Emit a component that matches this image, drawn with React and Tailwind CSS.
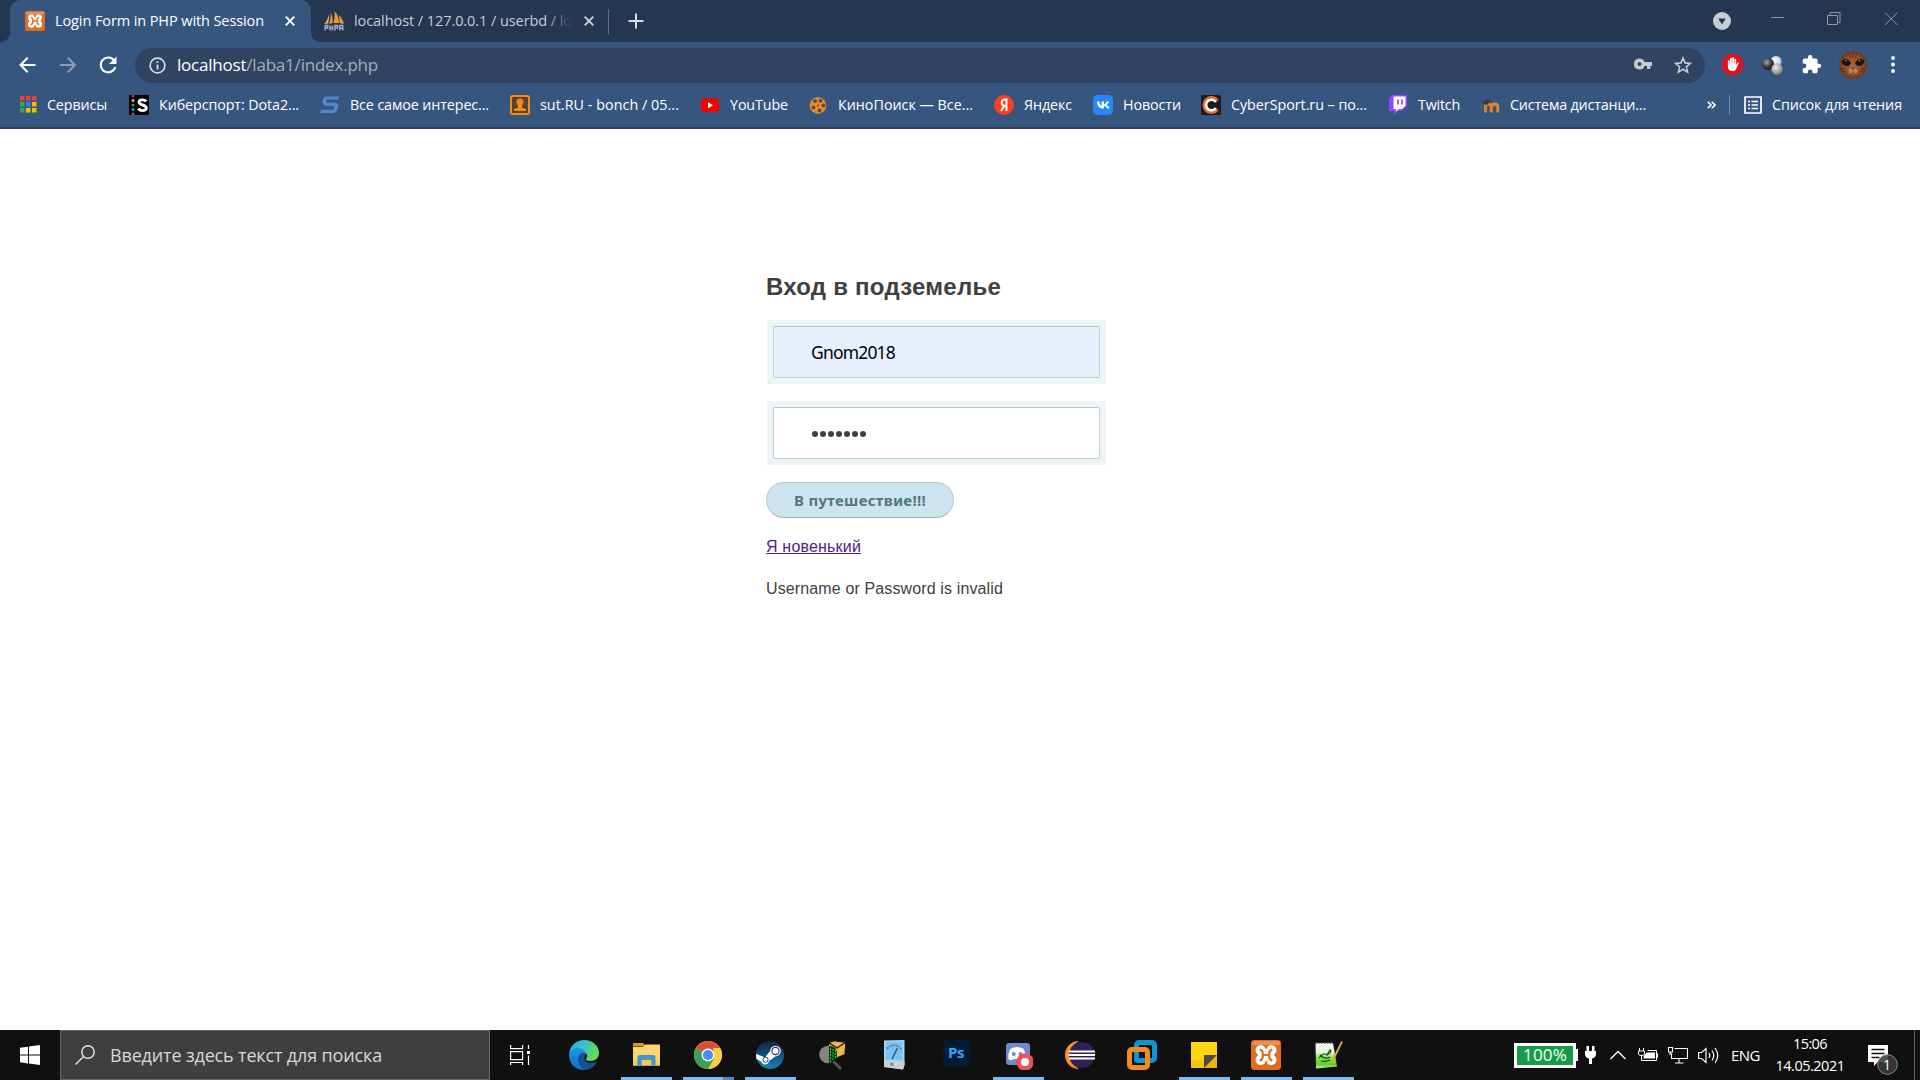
import React, { useLayoutEffect, useRef } from "react";

const UI = "font-['Open_Sans','Noto_Sans',sans-serif]";

/* Single-line label whose letters are spaced so that it fills its given width. */
function Label({ w, children, className = "", inner = "" }) {
  const ref = useRef(null);
  useLayoutEffect(() => {
    const el = ref.current;
    el.style.letterSpacing = "0px";
    const natural = el.getBoundingClientRect().width;
    const count = Math.max(1, el.textContent.length);
    el.style.letterSpacing = `${(w - natural) / count}px`;
  }, [w, children]);
  return (
    <span className={`block shrink-0 whitespace-nowrap ${className}`} style={{ width: w }}>
      <span ref={ref} className={`inline-block ${inner}`}>{children}</span>
    </span>
  );
}

function Xampp({ size }) {
  return (
    <svg width={size} height={size} viewBox="0 0 30 30" className="shrink-0">
      <rect width="30" height="30" rx="3.500" fill="#e06c22" />
      <rect x="1" y="1" width="28" height="4" rx="2" fill="#f4a778" opacity=".6" />
      <g fill="#fff">
        <circle cx="9.800" cy="10.300" r="5.300" /><circle cx="20.200" cy="10.300" r="5.300" />
        <circle cx="9.800" cy="19.700" r="5.300" /><circle cx="20.200" cy="19.700" r="5.300" />
        <path d="M7 12h16v6H7ZM12 9h6v12h-6Z" />
      </g>
      <path d="M15 5v3.500M15 25v-3.500M3.500 15h2.500M26.500 15H24" stroke="#e06c22" strokeWidth="2.400" />
      <path d="M9.500 9.700c3.300 1.800 3.300 8.800 0 10.600M20.500 9.700c-3.300 1.800-3.300 8.800 0 10.600M12 15h6" fill="none" stroke="#e06c22" strokeWidth="2.200" strokeLinecap="round" />
    </svg>
  );
}

function PmaIcon() {
  return (
    <svg width="20" height="20" viewBox="0 0 20 20" className="shrink-0">
      <path d="M5 13C6.500 9 7 5 6.500 1.500c2 3 2.500 7 2 10.500ZM9.500 12c1-3 1.500-8 1-12 3 3 4.500 8 4.500 12ZM15.300 12c.5-3 .3-5-.5-8 2.700 2 4.500 6 5 9Z" fill="#f29a2e" />
      <path d="M0 13c2.500-2 4-5.500 4.500-9.500.8 3 .6 5.500-.5 9Z" fill="#e8b06a" />
      <path d="M1.200 19.500v-5h2.500v2.500H1.200M6 19.500v-5M6 17h2.500M8.500 14.500v5M11 19.500v-5h2.500v2.500H11M15.700 19.500v-5h3v5M15.700 17.300h3" stroke="#a4abca" strokeWidth="1.500" fill="none" />
    </svg>
  );
}

const Cross = ({ color }) => (
  <svg width="10" height="10" viewBox="0 0 10 10" className="shrink-0">
    <path d="M.7.7l8.600 8.600M9.300.7L.7 9.300" stroke={color} strokeWidth="1.900" />
  </svg>
);

function TabStrip() {
  return (
    <div className="flex h-[42px] bg-[#243650]">
      <svg width="10" height="42" viewBox="0 0 10 42" className="shrink-0"><path d="M0 42C6 42 10 38 10 32V42Z" fill="#37567f" /></svg>
      <div className="flex h-full w-[301px] items-center rounded-t-[10px] bg-[#37567f] pl-[15px] text-[14.500px] text-white">
        <Xampp size={20} />
        <Label w={209} className="ml-[10px]">Login Form in PHP with Session</Label>
        <div className="ml-[21px]"><Cross color="#fff" /></div>
      </div>
      <svg width="10" height="42" viewBox="0 0 10 42" className="shrink-0"><path d="M10 42C4 42 0 38 0 32V42Z" fill="#37567f" /></svg>
      <div className="flex items-center pl-[3px] text-[14.500px] text-[#c6ccd5]">
        <PmaIcon />
        <div className="relative ml-[10px] w-[218px] overflow-hidden">
          <Label w={218}>localhost / 127.0.0.1 / userbd / lo</Label>
          <div className="absolute inset-y-0 right-0 w-[26px] bg-linear-to-r from-transparent to-[#243650]" />
        </div>
        <div className="ml-[12px]"><Cross color="#cdd3da" /></div>
        <div className="ml-[14px] h-[25px] w-px bg-[#62728a]" />
        <svg width="16" height="16" viewBox="0 0 16 16" className="ml-[19px]"><path d="M8 .5v15M.5 8h15" stroke="#d8dde3" strokeWidth="2" /></svg>
      </div>
      <svg width="18" height="18" viewBox="0 0 18 18" className="ml-auto mt-[12px] shrink-0">
        <circle cx="9" cy="9" r="9" fill="#c8ccd4" /><path d="M5.200 6.500h7.600L9 12.500Z" fill="#243650" />
      </svg>
      <svg width="189" height="42" viewBox="0 0 189 42" className="shrink-0" fill="none" stroke="#8f99a8" strokeWidth="1">
        <path d="M40 17.500h13M96.500 15.500h10v9h-10ZM99 15v-2.500h10v10h-2.500M154 12.500l12.500 12.500M166.500 12.500L154 25" />
      </svg>
    </div>
  );
}

function Avatar() {
  return (
    <svg width="28" height="28" viewBox="0 0 28 28" className="shrink-0">
      <defs><radialGradient id="fur" cx=".5" cy=".5" r=".6"><stop offset="0" stopColor="#a9653a" /><stop offset=".6" stopColor="#8c4a25" /><stop offset="1" stopColor="#552810" /></radialGradient></defs>
      <circle cx="14" cy="14" r="14" fill="url(#fur)" />
      <path d="M10 2l1.500 5M14 1v6M18 2l-1.500 5M1 17l5 1M2 21l5-1M27 17l-5 1M26 21l-5-1" stroke="#5d2c14" strokeWidth=".9" />
      <path d="M2.500 10.500C4 7 9 7 12 12c-1.500 4.500-7.500 4-9.500-1.500Z" fill="#1a120f" /><path d="M25.500 10.500C24 7 19 7 16 12c1.500 4.500 7.500 4 9.500-1.500Z" fill="#1a120f" />
      <circle cx="7" cy="9.800" r=".7" fill="#bbb" /><circle cx="20.500" cy="9.800" r=".7" fill="#bbb" />
      <ellipse cx="14" cy="20" rx="4.500" ry="3.300" fill="#bb8666" />
      <path d="M12.500 17h3L14 18.800ZM14 19v2M11.500 22.500q2.500-2 5 0" fill="#7a4030" stroke="#7a4030" strokeWidth=".6" />
    </svg>
  );
}

function Toolbar() {
  return (
    <div className="flex h-[46px] items-center bg-[#37567f] pl-[17px]">
      <svg width="20" height="20" viewBox="0 0 20 20" fill="none" stroke="#fff" strokeWidth="2"><path d="M18.500 10H3.500M10.700 2.700L3.500 10l7.200 7.300" /></svg>
      <svg width="20" height="20" viewBox="0 0 20 20" className="ml-[21px]" fill="none" stroke="#8b9db7" strokeWidth="2"><path d="M2 10h14.500M9.800 2.700L17 10l-7.200 7.300" /></svg>
      <svg width="20" height="20" viewBox="0 0 20 20" className="ml-[20px]"><path d="M16.300 5.700A7.400 7.400 0 1 0 17.300 12" fill="none" stroke="#fff" strokeWidth="2.100" /><path d="M18.500 1.500v7.500h-7.500Z" fill="#fff" /></svg>
      <div className="ml-[17px] flex h-[35px] w-[1570px] items-center rounded-full bg-[#304360] pl-[14px]">
        <svg width="17" height="17" viewBox="0 0 17 17" fill="none"><circle cx="8.500" cy="8.500" r="7.400" stroke="#d7dce3" strokeWidth="1.700" /><path d="M8.500 7.500v5M8.500 4.200v1.900" stroke="#d7dce3" strokeWidth="1.800" /></svg>
        <Label w={201} className="ml-[11px] text-[17px] text-[#a4aebd]"><span className="text-white">localhost</span>/laba1/index.php</Label>
        <svg width="18" height="12" viewBox="0 0 18 12" className="ml-auto -mt-[2px]" fill="#c5cad1"><path fillRule="evenodd" d="M5.500.5a5.500 5.500 0 1 0 5.100 7.500H13v3h3.300V8H18V4H10.600A5.500 5.500 0 0 0 5.500.5ZM5.500 4a2 2 0 1 1 0 4 2 2 0 0 1 0-4Z" /></svg>
        <svg width="18" height="18" viewBox="0 0 18 18" className="ml-[22px] mr-[13px]" fill="none" stroke="#c5cad1" strokeWidth="1.600"><path d="M9 2l2.100 4.900 5.300.5-4 3.500 1.200 5.200L9 13.300l-4.600 2.800 1.200-5.200-4-3.500 5.300-.5Z" /></svg>
      </div>
      <svg width="21" height="21" viewBox="0 0 21 21" className="ml-[17px] -mt-[1px]">
        <path d="M6.200 0h8.600L21 6.200v8.600L14.800 21H6.200L0 14.800V6.200Z" fill="#e1121b" />
        <path d="M6.700 12V7M8.900 11V4.500M11.100 11V4M13.300 11V5.500" stroke="#fff" strokeWidth="1.700" strokeLinecap="round" />
        <path d="M5.900 9.500h8.200v1.500l1.200-2c.8-.8 1.700-.2 1.300.6l-2.300 5.200c-.6 1.500-1.700 2.200-3.300 2.200-3.500 0-5.100-1.500-5.100-4.500Z" fill="#fff" />
      </svg>
      <svg width="21" height="20" viewBox="0 0 21 20" className="ml-[19px] -mt-[1px]">
        <defs>
          <radialGradient id="b1" cx=".4" cy=".35" r=".7"><stop offset="0" stopColor="#aaa" /><stop offset=".5" stopColor="#444" /><stop offset="1" stopColor="#111" /></radialGradient>
          <radialGradient id="b2" cx=".4" cy=".35" r=".7"><stop offset="0" stopColor="#fff" /><stop offset="1" stopColor="#b8b8b8" /></radialGradient>
          <radialGradient id="b3" cx=".4" cy=".35" r=".7"><stop offset="0" stopColor="#eee" /><stop offset="1" stopColor="#777" /></radialGradient>
        </defs>
        <circle cx="14" cy="6.500" r="5.500" fill="url(#b2)" /><circle cx="6" cy="9" r="6" fill="url(#b1)" /><circle cx="15" cy="14.200" r="5.600" fill="url(#b3)" />
      </svg>
      <svg width="21" height="21" viewBox="0 0 24 24" className="ml-[18px] -mt-[1px]" fill="#fff"><path d="M20.500 11H19V7c0-1.100-.9-2-2-2h-4V3.500a2.500 2.500 0 0 0-5 0V5H4c-1.100 0-2 .9-2 2v3.800h1.500a2.700 2.700 0 0 1 0 5.400H2V20c0 1.100.9 2 2 2h3.800v-1.500a2.700 2.700 0 0 1 5.400 0V22H17c1.100 0 2-.9 2-2v-4h1.500a2.500 2.500 0 0 0 0-5Z" /></svg>
      <div className="ml-[17px]"><Avatar /></div>
      <svg width="4" height="17" viewBox="0 0 4 17" className="ml-[24px] -mt-[1px]" fill="#fff"><circle cx="2" cy="2" r="1.900" /><circle cx="2" cy="8.500" r="1.900" /><circle cx="2" cy="15" r="1.900" /></svg>
    </div>
  );
}

const B = ({ children }) => <svg width="20" height="20" viewBox="0 0 20 20" className="shrink-0">{children}</svg>;

const bookmarks = [
  ["Сервисы", 60, "mr-[22px]", <B>
    {["#ea4335", "#ea4335", "#ea4335", "#34a853", "#2f80ed", "#fbbc05", "#34a853", "#fbbc05", "#fbbc05"].map((c, i) => (
      <rect key={i} x={3 + (i % 3) * 6} y={1 + Math.floor(i / 3) * 6} width="4.500" height="4.500" fill={c} />
    ))}
  </B>],
  ["Киберспорт: Dota2...", 140, "mr-[21px]", <B>
    <rect width="20" height="20" fill="#050505" />
    {["#b02a90", "#f0b020", "#35a853", "#2a8be0", "#c04090"].map((c, i) => <circle key={i} cx="4" cy={1 + i * 4.500} r="1.500" fill={c} />)}
    <path d="M17 6.500C16 4.500 10.200 4 10 7c0 3.500 7.300 2.200 7.300 6 0 3.200-6.300 3.400-8 .5" fill="none" stroke="#fff" strokeWidth="2.800" />
  </B>],
  ["Все самое интерес...", 139, "mr-[21px]", <B>
    <path d="M6 1.500h13l-1 3H7.500C5.500 4.500 5.500 7.500 7.500 7.500H13c5 0 6 2.500 5.200 5.500-.8 3.500-2.700 5-6.200 5H0l1-3.200h11c2.500 0 3.500-4 1-4H6c-4.500 0-4.800-9.300 0-9.300Z" fill="#5585cc" />
  </B>],
  ["sut.RU - bonch / 05...", 139, "mr-[21px]", <B>
    <rect x="1" y="1" width="18" height="18" rx="2" fill="#5a422c" stroke="#f58a1a" strokeWidth="2" />
    <path d="M10 3.500c3 0 3.800 2.200 3.300 4.500-.3 1.300-.8 2-1.300 2.700v2l4 1.300v2H4v-2l4-1.300v-2C6.700 9.500 6.500 8 6.500 7 6.500 5 7.700 3.500 10 3.500Z" fill="#f58a1a" />
  </B>],
  ["YouTube", 58, "mr-[20px]", <B>
    <rect x="1" y="3.500" width="18" height="13.500" rx="3" fill="#f80000" /><path d="M8 7.200l5 3-5 3Z" fill="#fff" />
  </B>],
  ["КиноПоиск — Все...", 135, "mr-[21px]", <B>
    <circle cx="10" cy="10.500" r="8.300" fill="#f28c1e" />
    {[[7, 6], [12.500, 5.800], [15.500, 10.500], [11.500, 15.500], [5.500, 12.500]].map(([x, y], i) => <circle key={i} cx={x} cy={y} r="2" fill="#4c4f57" />)}
    <circle cx="10" cy="10.500" r="1" fill="#4c4f57" />
  </B>],
  ["Яндекс", 48, "mr-[21px]", <B>
    <circle cx="10" cy="10" r="10" fill="#fc3f1d" /><path d="M12.500 16V4.500h-1.700c-4.300 0-4 6.300 0 6.300h1.700M10.500 10.500L7 16" fill="none" stroke="#fff" strokeWidth="2" />
  </B>],
  ["Новости", 58, "mr-[20px]", <B>
    <rect width="20" height="20" rx="4.500" fill="#2787f5" />
    <path d="M3.300 6.500h2.200c.2 2.500 1.300 4 2.300 4.300V6.500h2.100v2.700c1.200-.2 2.200-1.400 2.700-2.700h2.200c-.4 1.600-1.400 2.800-2.300 3.400 1 .5 2.200 1.600 2.800 3.700H13c-.5-1.400-1.600-2.400-3.100-2.600v2.600h-.4C5.500 13.600 3.400 11 3.300 6.500Z" fill="#fff" transform="translate(.5 0) scale(1.050 1)" />
  </B>],
  ["CyberSport.ru – по...", 136, "mr-[21px]", <B>
    <rect width="20" height="20" rx="1.500" fill="#1d1b1d" />
    <path d="M16.500 5.500A7.500 7.500 0 1 0 16.500 14.500" fill="none" stroke="#e5702a" strokeWidth="3" />
    <path d="M14.800 7A5.300 5.300 0 1 0 14.800 13" fill="none" stroke="#fff" strokeWidth="2.600" />
  </B>],
  ["Twitch", 42, "mr-[20px]", <B>
    <path d="M4 0h15v11l-5 5h-4l-4 4v-4H1V4Z" fill="#9146ff" /><path d="M5.500 1.500h12v9L14 14h-3l-3 2.500V14H5.500Z" fill="#fff" /><path d="M10 4.500v5M14 4.500v5" stroke="#9146ff" strokeWidth="1.700" />
  </B>],
  ["Система дистанци...", 136, "", <B>
    <path d="M5.500 17.500v-7M5.500 12c0-4 5.800-4 5.800 0v5.500M11.800 12c0-4 6-4 6 0v5.500" fill="none" stroke="#e98328" strokeWidth="2.900" />
    <path d="M0 8l8-4 4 1.500-5 4.500Z" fill="#3c3d43" /><path d="M1.500 8v6" stroke="#6a6b70" strokeWidth=".8" />
  </B>],
];

function Bookmarks() {
  return (
    <div className="flex h-[41px] items-center border-b-2 border-[#2b405e] bg-[#37567f] pb-[5px] pl-[17px] text-[14.300px] text-white">
      {bookmarks.map(([t, w, m, icon]) => (
        <div key={t} className={`flex shrink-0 items-center gap-[10px] ${m}`}>{icon}<Label w={w}>{t}</Label></div>
      ))}
      <svg width="9" height="8" viewBox="0 0 9 8" className="ml-[61px] -mt-[1px]" fill="none" stroke="#fff" strokeWidth="1.600"><path d="M.7.7L4 4 .7 7.300M4.700.7L8 4 4.700 7.300" /></svg>
      <div className="ml-[13px] h-5 w-px bg-[#7388a5]" />
      <svg width="18" height="18" viewBox="0 0 18 18" className="ml-[14px]" fill="none" stroke="#fff" strokeWidth="1.700"><path d="M1 1h16v16H1ZM4 5.500h2M7.500 5.500H14M4 9h2M7.500 9H14M4 12.500h2M7.500 12.500H14" /></svg>
      <Label w={130} className="ml-[10px]">Список для чтения</Label>
    </div>
  );
}

function LoginPage() {
  return (
    <main className="flex-1 bg-white pl-[767px] font-['Liberation_Sans',Arial,sans-serif] text-[16px] text-[#404040]">
      <h1 className="mt-[142px] -ml-[1px] h-[32px] text-[24px] leading-[32px] font-bold"><Label w={235}>Вход в подземелье</Label></h1>
      <div className="mt-[17px] w-[339px] bg-[#eff4f7] p-[6px]">
        <div className="flex h-[52px] items-center rounded-[2px] border border-[#c8ced6] border-t-[#bcc0c4] bg-[#e8f0fe] pl-[37px] font-['Noto_Sans',sans-serif] text-[17.500px] text-black">
          <Label w={84}>Gnom2018</Label>
        </div>
      </div>
      <div className="mt-[17px] w-[339px] bg-[#eff4f7] p-[6px]">
        <div className="flex h-[52px] items-center gap-[2px] rounded-[2px] border border-[#c8cdd0] border-t-[#bcc0c2] bg-white pt-[2px] pl-[38px]">
          {[0, 1, 2, 3, 4, 5, 6].map((i) => <span key={i} className="size-[6px] rounded-full bg-[#404040]" />)}
        </div>
      </div>
      <button className="mt-[17px] -ml-px flex h-[36px] w-[188px] items-center rounded-full border border-[#b4ccce] border-b-[#9eb9c2] bg-[#cde5ef] pl-[27px] text-left font-['Noto_Sans',sans-serif] text-[15px] font-bold text-[#527881]">
        <Label w={132}>В путешествие!!!</Label>
      </button>
      <a className="mt-[19px] -ml-[1px] block w-[94px] leading-[20px] text-[#551a8b]"><Label w={95} inner="underline">Я новенький</Label></a>
      <p className="mt-[22px] -ml-[1px] leading-[20px]"><Label w={237}>Username or Password is invalid</Label></p>
    </main>
  );
}

const S = ({ children }) => <svg width="30" height="30" viewBox="0 0 30 30">{children}</svg>;

const apps = [
  ["edge", "", <S>
    <defs>
      <linearGradient id="e1" x1="0" y1="0" x2="1" y2=".4"><stop offset="0" stopColor="#25a8df" /><stop offset=".5" stopColor="#36c3d1" /><stop offset="1" stopColor="#66dc55" /></linearGradient>
      <linearGradient id="e2" x1="0" y1="0" x2="0" y2="1"><stop offset="0" stopColor="#1a9be4" /><stop offset="1" stopColor="#1268c4" /></linearGradient>
    </defs>
    <path d="M0 14C1 5 8 0 15 0c9 0 15 6 15 13 0 5-4 8-8.500 8-3 0-5-1-4.500-2 1.500-2 1.500-4 0-6C12 7 3 8 0 14Z" fill="url(#e1)" />
    <path d="M0 15C2 8 9 6 14 9.500c2 1.400 3.500 4 2.700 5.500C14 11 9 15 9.500 20c.5 4 3 8 7 9.900C7 31 0 24 0 15Z" fill="url(#e2)" />
    <path d="M10 17c1-3.500 4.500-5 6.500-3-2 3-1.500 9 5.500 9 2.500 0 4.500-.7 6-1.700C25.500 27 21 30 16.500 30 11.500 28 8.500 22 10 17Z" fill="#154f94" />
  </S>],
  ["explorer", "on", <S>
    <path d="M2 3h10.500l1.500 3.500H2Z" fill="#d99a1c" /><path d="M2 7l10 0 2-2.500h15V25.500H2Z" fill="#fdd66b" /><path d="M2 20h27v5.500H2Z" fill="#f6c95a" />
    <path d="M6.500 25.500V17a2 2 0 0 1 2-2h14a2 2 0 0 1 2 2v8.500h-4.200V20h-9.600v5.500Z" fill="#4494d1" />
  </S>],
  ["chrome", "split", <S>
    <circle cx="15" cy="15" r="14" fill="#f9ce3c" />
    <path d="M15 15L2.900 8A14 14 0 0 1 27.100 8Z" fill="#d94f3d" /><path d="M2.900 8A14 14 0 0 0 15 29l6-10.500-6-3.500Z" fill="#3c9e56" /><path d="M27.100 8A14 14 0 0 1 15 29l6.500-10L20 8Z" fill="#f9ce3c" />
    <circle cx="15" cy="15" r="6.500" fill="#fff" /><circle cx="15" cy="15" r="5.100" fill="#4c8bf5" />
  </S>],
  ["steam", "on", <S>
    <defs><linearGradient id="st" x1="0" y1="0" x2="0" y2="1"><stop offset="0" stopColor="#14203f" /><stop offset="1" stopColor="#1982b8" /></linearGradient></defs>
    <circle cx="15" cy="15" r="14" fill="url(#st)" />
    <path d="M1 14l9 3.500 5-6.500 6 5-7 5a4 4 0 0 1-7.800.5L1.500 19Z" fill="#fff" />
    <circle cx="20.500" cy="11" r="5.300" fill="#fff" /><circle cx="20.500" cy="11" r="3.600" fill="none" stroke="#17345c" strokeWidth="1.100" /><circle cx="10.500" cy="19.700" r="2.600" fill="none" stroke="#17345c" strokeWidth=".9" />
  </S>],
  ["mail-search", "", <S>
    <path d="M12 3l7-2 10 1-1 12-10 4-6-4Z" fill="#eeb64a" /><path d="M12 3l8 5 9-6M19 1l10 1-1 12" fill="none" stroke="#1a1200" strokeWidth="1.300" />
    <path d="M15.500 20.500l8.500 8.500" stroke="#55585a" strokeWidth="2.600" />
    <circle cx="11" cy="14.500" r="8.800" fill="#85837f" /><path d="M12 6c6 0 8 4 8 8.500 0 5-3 8-8 8.500Z" fill="#06330d" /><path d="M13.500 8v14M16 9v11M18.500 10v8" stroke="#21d436" strokeWidth="1.100" strokeDasharray="2 1" />
  </S>],
  ["gauge", "", <S>
    <path d="M5 .5L25.500 0v25L24 29.500 5 27Z" fill="#a9d8ee" /><path d="M6.500 2H23.500v18.500L6.500 20Z" fill="#7cc2ee" /><path d="M8 9q7-7.500 14.500 0" fill="none" stroke="#2f77b5" strokeWidth="1.500" strokeDasharray="1.500 1" />
    <path d="M18.500 8L13 19" stroke="#1d5a8e" strokeWidth="1.500" /><path d="M5 20.500l20.500.8V25L24 29.500 5 27Z" fill="#c9ced2" /><circle cx="13" cy="24.300" r="2" fill="#8b959b" />
  </S>],
  ["photoshop", "", <div className="-mt-[3px] flex size-[27px] items-center justify-center rounded-[5px] bg-[#001d33] pb-[2px] font-['Open_Sans',sans-serif] text-[15px] font-bold tracking-tight text-[#31a8ff]">Ps</div>],
  ["discord", "on", <S>
    <rect x="3" y="3" width="24" height="22" rx="3" fill="#7187d0" /><path d="M5.500 19c-.5-4.500.5-8.500 2.500-10.500 4-2 8-2 12 0 2 2.500 3 6 2.500 10.500-3 2-4 1-5 0h-7c-1 1-3 2-5 0Z" fill="#fff" />
    <circle cx="10.800" cy="14" r="2" fill="#7187d0" /><circle cx="17.500" cy="14" r="2" fill="#7187d0" />
    <circle cx="22" cy="22" r="8.700" fill="#e85458" /><circle cx="22" cy="22" r="4" fill="#fff" />
  </S>],
  ["eclipse", "", <S>
    <path d="M14 1A14 14 0 0 0 14 29 16 16 0 0 1 14 1Z" fill="#f7941e" /><circle cx="17" cy="15" r="13" fill="#2c2255" />
    <path d="M4 11.500h26M3.500 15h27M4 18.500h26" stroke="#fff" strokeWidth="2" />
  </S>],
  ["vmware", "", <S>
    <rect x="9.500" y="2.500" width="18" height="18" rx="2.500" fill="none" stroke="#0d95d6" strokeWidth="5" />
    <rect x="2.500" y="9.500" width="18" height="18" rx="2.500" fill="none" stroke="#f38b18" strokeWidth="5" /><path d="M9.500 12v8.500h8.500" fill="none" stroke="#0d95d6" strokeWidth="4" />
  </S>],
  ["notes", "on", <S><path d="M2 2h26v13L15 28H2Z" fill="#fdd60f" /><path d="M2 20h13v8H2Z" fill="#f5c60c" /><path d="M15 15h13L15 28Z" fill="#4a4a4a" /><path d="M28 15v13H15Z" fill="#eab600" /></S>],
  ["xampp", "on", <Xampp size={30} />],
  ["notepad", "on", <S>
    <defs><linearGradient id="np" x1="0" y1="0" x2="0" y2="1"><stop offset="0" stopColor="#f2f4f0" /><stop offset=".35" stopColor="#eaf5df" /><stop offset=".6" stopColor="#7ee03a" /><stop offset=".85" stopColor="#5fcf2c" /><stop offset="1" stopColor="#dcefd4" /></linearGradient></defs>
    <path d="M2.500 3h17.500l4 23.500L3 28.500Z" fill="url(#np)" /><path d="M3 3h17" stroke="#555" strokeWidth="1.600" strokeDasharray="1.500 1.200" />
    <path d="M6 18q4-6 8-3 3-6 3.500-5 1 3-3 4.500M7 15q5 5 10 2M8 21q5 1 9-1" fill="none" stroke="#14491c" strokeWidth="1.200" />
    <path d="M29 1.500L18.500 23" stroke="#e5a52c" strokeWidth="1.900" />
  </S>],
];

function Underline({ kind }) {
  if (kind === "split")
    return <div className="flex h-[3px] w-[51px]"><div className="h-full w-10 bg-[#7abaf5]" /><div className="h-full w-[11px] bg-[#568ab3]" /></div>;
  return <div className={`h-[3px] w-[51px] ${kind === "on" ? "bg-[#7abaf5]" : ""}`} />;
}

function Taskbar() {
  return (
    <footer className="flex h-[50px] items-center bg-[#101010] text-white">
      <div className="flex w-[60px] justify-center">
        <svg width="20" height="20" viewBox="0 0 20 20" fill="#fff"><path d="M0 2.800L8 1.700V9.500H0ZM9 1.500L20 0v9.500H9ZM0 10.500h8v7.900L0 17.200ZM9 10.500h11V20L9 18.500Z" /></svg>
      </div>
      <div className="flex h-[50px] w-[430px] items-center border border-[#676767] bg-[#3f3f3f] pl-[14px]">
        <svg width="20" height="20" viewBox="0 0 20 20" fill="none" stroke="#e6e6e6" strokeWidth="1.400"><circle cx="13" cy="7" r="6.200" /><path d="M8.500 11.500L.5 19.500" /></svg>
        <Label w={272} className="ml-[15px] text-[18px] text-[#d8d8d8]">Введите здесь текст для поиска</Label>
      </div>
      <svg width="20" height="20" viewBox="0 0 20 20" className="ml-[20px]" fill="none" stroke="#fff" strokeWidth="1.200"><path d="M.6 0v3.600h12V0M.6 6.600h12v8H.6ZM.6 20v-2.500h12V20M18.500 0v4M18.500 10.500V20" /><path d="M17 6h3v3h-3Z" fill="#fff" stroke="none" /></svg>
      <div className="ml-[23px] flex h-full">
        {apps.map(([name, kind, icon]) => (
          <div key={name} className="flex h-full w-[62px] flex-col items-center justify-between">
            <div className="mt-[10px] flex h-[30px] items-center">{icon}</div>
            <Underline kind={kind} />
          </div>
        ))}
      </div>
      <div className="ml-[155px] flex h-[25px] w-[62px] items-center justify-center border-[3px] border-white bg-[#169b48] text-[17px]"><Label w={44}>100%</Label></div>
      <div className="h-[12px] w-[2px] bg-white" />
      <svg width="11" height="18" viewBox="0 0 11 18" className="ml-[7px]" fill="#fff"><path d="M1.500 0H4v5h3V0h2.500v5H11v3c0 2.500-1.500 4-4 4.500V18H4v-5.500C1.500 12 0 10.500 0 8V5h1.500Z" /></svg>
      <svg width="16" height="10" viewBox="0 0 16 10" className="ml-[14px]" fill="none" stroke="#fff" strokeWidth="1.300"><path d="M.5 9L8 1.500 15.500 9" /></svg>
      <svg width="20" height="14" viewBox="0 0 20 14" className="ml-[12px]" fill="none" stroke="#fff"><path d="M1.500 0v3M5.500 0v3M.5 3h6v3q0 1.500-3 1.500-3 0-3-1.500ZM3.500 7v5.500h15V2.500h-9M18.500 5.500h1v4h-1" /><path d="M5.500 10.500V8.500l3-4H17v6Z" fill="#fff" stroke="none" /></svg>
      <svg width="20" height="17" viewBox="0 0 20 17" className="ml-[10px]" fill="none" stroke="#fff" strokeWidth="1.100"><path d="M6.500 1.500h13v10h-16V7M11 11.500v4M7 16h8.500M.5.500h4V5h-4ZM2.500 5v2M1 7h3" /></svg>
      <svg width="21" height="17" viewBox="0 0 21 17" className="ml-[10px]" fill="none" stroke="#fff" strokeWidth="1.200"><path d="M.6 5.500h3L8 1.500v14l-4.400-4h-3ZM11 6q1.500 2.500 0 5M14 3.500q3.500 5 0 10M17 1q5.500 7.500 0 15" /></svg>
      <Label w={29} className="ml-[12px] text-[15px]">ENG</Label>
      <div className="ml-[15px] flex w-[70px] flex-col items-center text-[14.500px] leading-[22px]">
        <Label w={34}>15:06</Label>
        <Label w={69}>14.05.2021</Label>
      </div>
      <div className="relative ml-[23px] h-[30px] w-[30px] translate-y-[5px]">
        <svg width="30" height="30" viewBox="0 0 30 30"><path d="M0 0h20v17H9.500L6 21v-4H0Z" fill="#fff" /><path d="M3.500 4.500h13M3.500 8.500h13M3.500 12.500h8" stroke="#101010" strokeWidth="1.400" /><circle cx="19.500" cy="19.500" r="9.800" fill="#3a3a3a" fillOpacity=".88" stroke="#8b8b8b" /></svg>
        <span className="absolute top-[11px] left-[15px] text-[14px] leading-[17px]">1</span>
      </div>
      <div className="ml-auto h-full w-[6px] border-l border-[#5f5f5f]" />
    </footer>
  );
}

export default function App() {
  return (
    <div className={`flex h-[1080px] w-[1920px] flex-col overflow-hidden ${UI}`}>
      <TabStrip />
      <Toolbar />
      <Bookmarks />
      <LoginPage />
      <Taskbar />
    </div>
  );
}
